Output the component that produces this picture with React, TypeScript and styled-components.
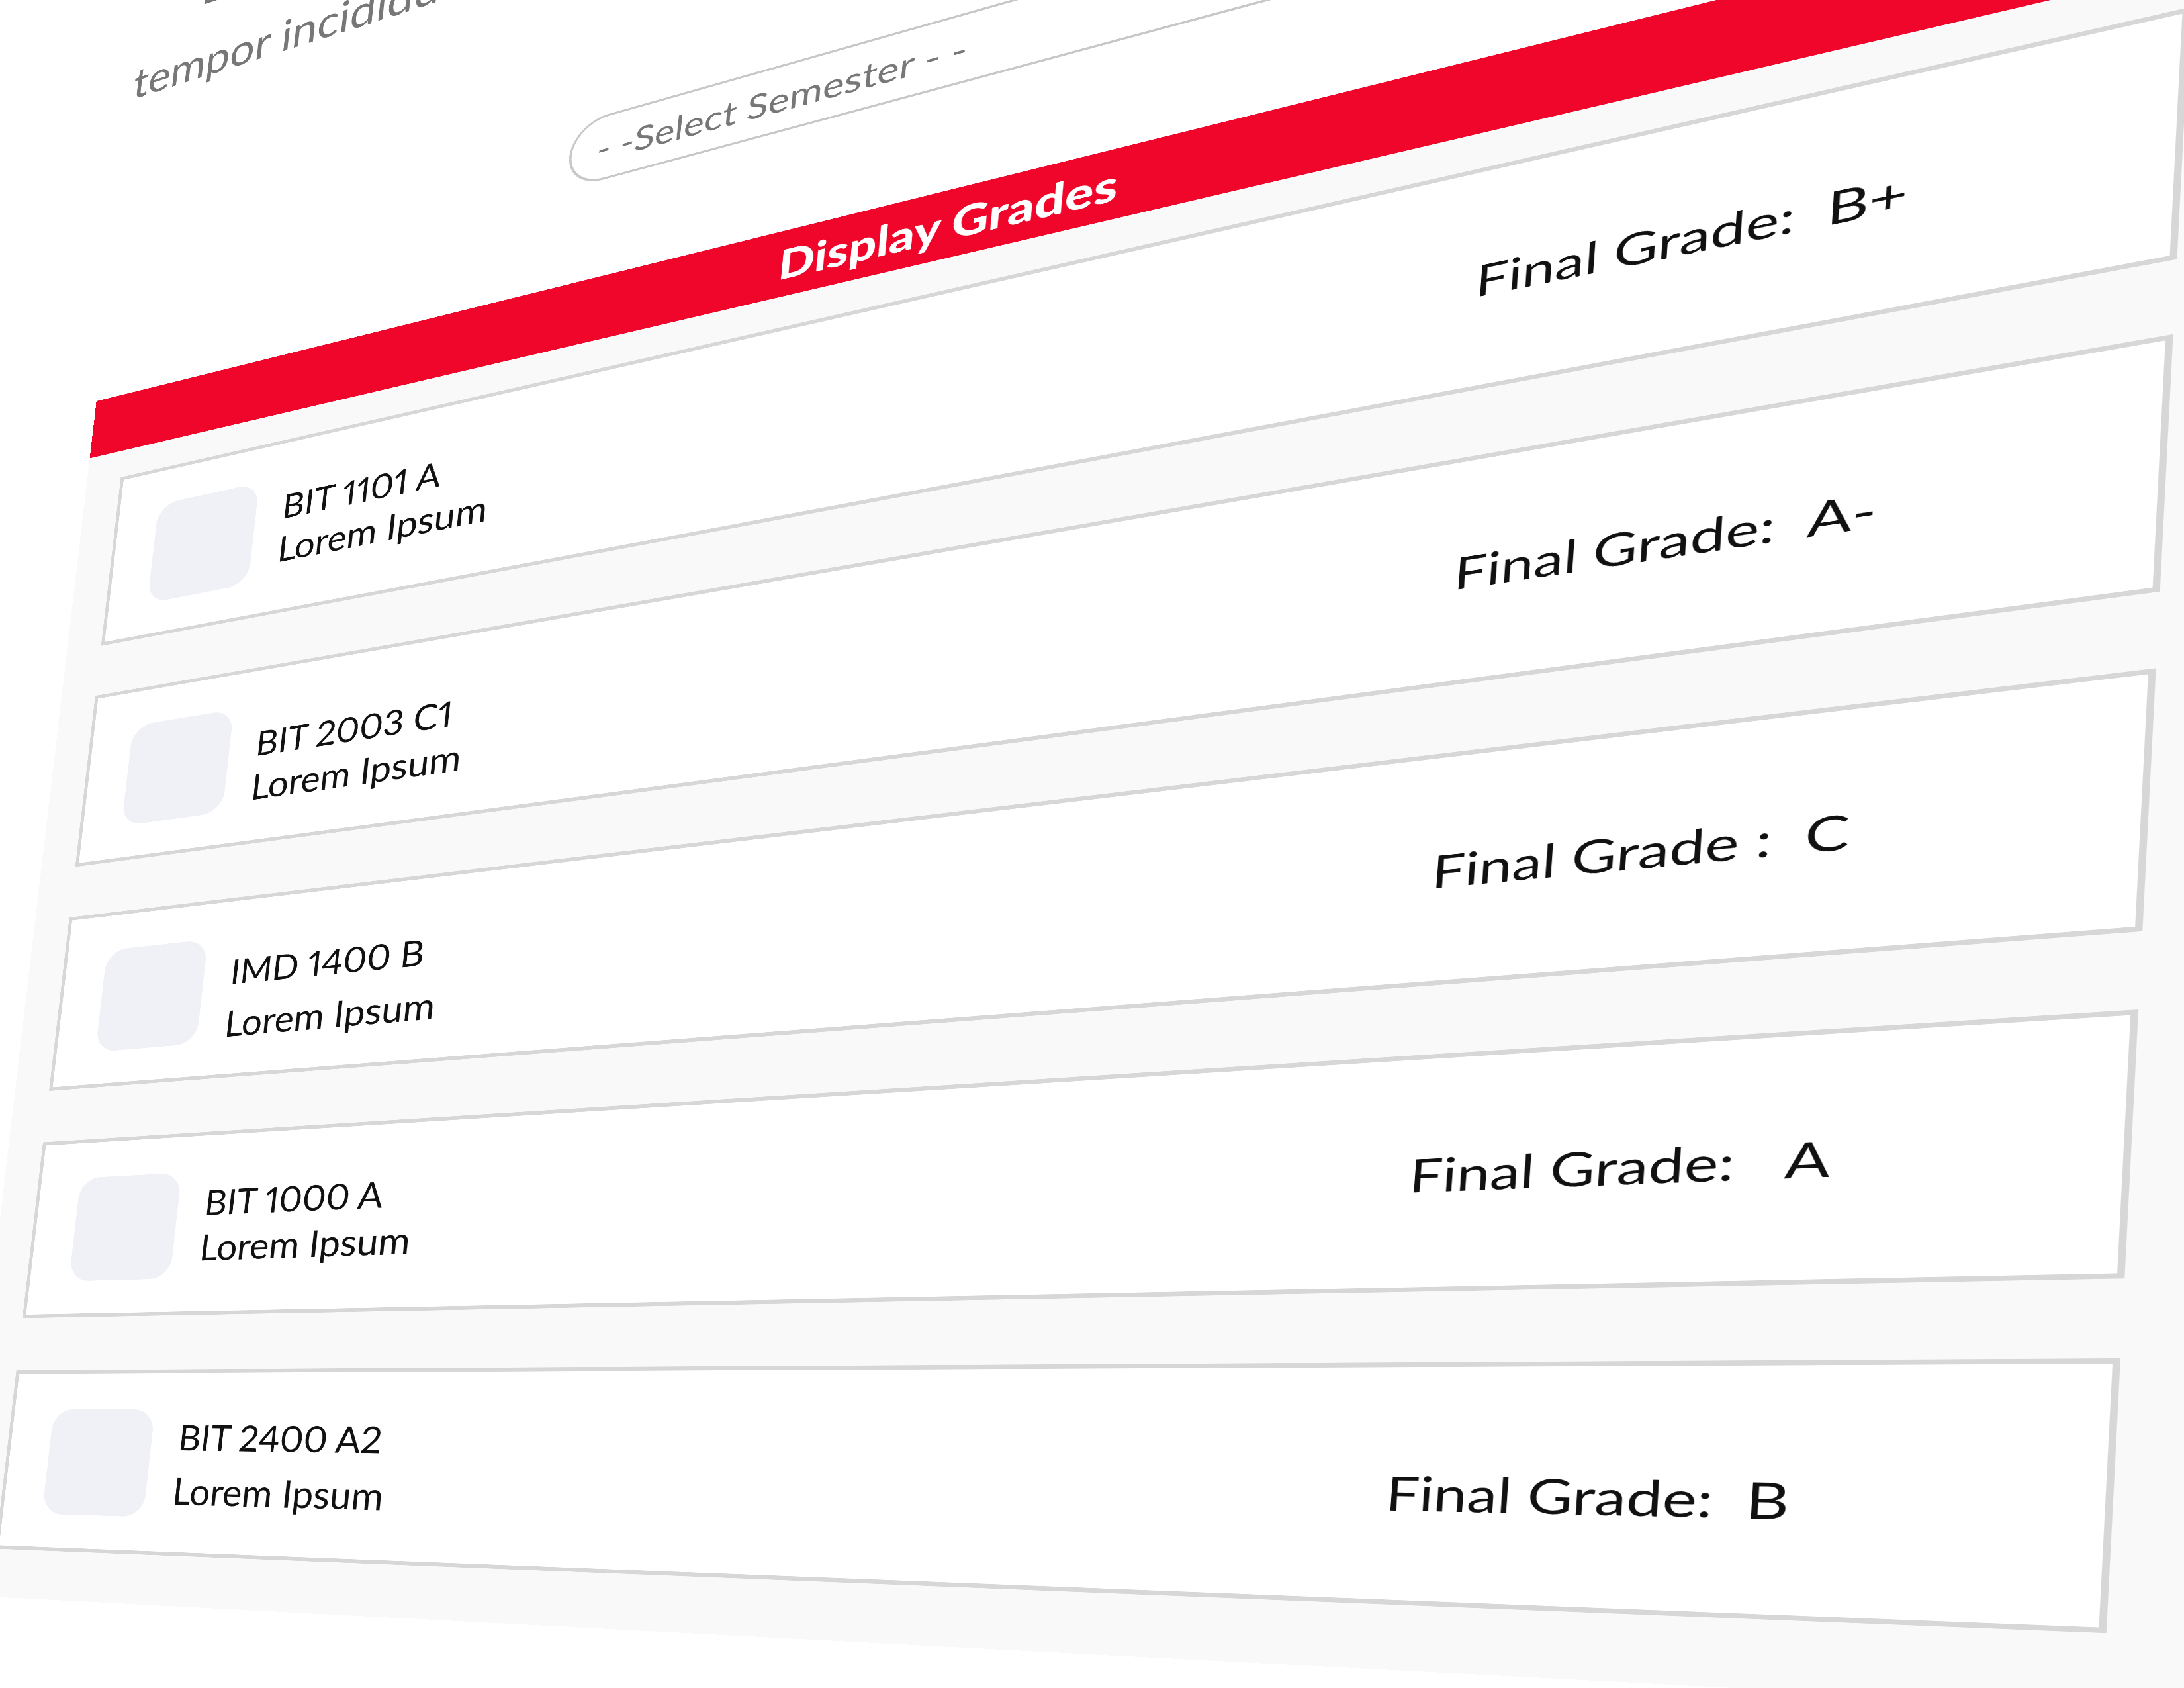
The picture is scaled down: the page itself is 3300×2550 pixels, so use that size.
import React from "react";
import styled, { createGlobalStyle } from "styled-components";

const GlobalStyle = createGlobalStyle`
  *, *::before, *::after { box-sizing: border-box; }
  body {
    margin: 0;
    overflow: hidden;
    background: #ffffff;
    color: #111111;
    font-family: Lato, "Open Sans", sans-serif;
    font-variant-numeric: proportional-nums;
  }
`;

const Stage = styled.div`
  width: 100%;
  height: 100vh;
  overflow: hidden;
`;

/* The whole page is shown as a tilted sheet seen in perspective. */
const Board = styled.main`
  width: calc(100vw + 1112px);
  transform-origin: 0 0;
  transform: matrix3d(
      0.477024, -0.169976, 0, -0.0000808071,
      -0.060038, 0.489167, 0, -0.0000105364,
      0, 0, 1, 0,
      182.5, 721, 0, 1
    )
    translate(-106px, -1595px);
`;

const Intro = styled.p`
  margin: 0;
  color: #777777;
  font-size: 130px;
  line-height: 232px;
  text-align: center;
  white-space: nowrap;
`;

const Filter = styled.form`
  display: flex;
  justify-content: center;
  padding: 417px 0 272px;
`;

const SemesterSelect = styled.select`
  appearance: none;
  width: 1836px;
  height: 184px;
  padding: 0 64px;
  border: 6px solid #c8c8c8;
  border-radius: 92px;
  background: #ffffff;
  color: #777777;
  font-family: inherit;
  font-size: 92px;
`;

const Title = styled.h1`
  margin: 0;
  padding-right: 32px;
  background: #f0062b;
  color: #ffffff;
  font-family: "Lato Black", Lato, sans-serif;
  font-size: 108px;
  font-weight: 900;
  line-height: 176px;
  text-align: center;
`;

const Panel = styled.section`
  background: #f9f9f9;
`;

const CourseList = styled.ul`
  display: flex;
  flex-direction: column;
  gap: 150px;
  margin: 0;
  padding: 82px 106px 136px;
  list-style: none;
`;

const Card = styled.li`
  display: flex;
  align-items: center;
  gap: 76px;
  height: 510px;
  padding: 8px 0 0 118px;
  border: 10px solid #d7d7d7;
  background: #ffffff;
`;

const Thumb = styled.div`
  flex: none;
  width: 296px;
  height: 296px;
  border-radius: 60px;
  background: #f0f1f6;
`;

const Course = styled.div<{ $loose?: boolean; $low?: boolean }>`
  flex: 1;
  padding-top: ${(p) => (p.$low ? 48 : 0)}px;
  font-size: 100px;
  line-height: ${(p) => (p.$loose ? 146 : 124)}px;
`;

const Code = styled.h2`
  margin: 0;
  font-size: 96px;
  font-weight: 400;
`;

const Name = styled.p`
  margin: 0;
`;

const Grade = styled.p<{ $low?: boolean }>`
  display: flex;
  flex: none;
  width: 1060px;
  margin: 0;
  padding-top: ${(p) => (p.$low ? 32 : 0)}px;
  font-size: 98px;
`;

const GradeLabel = styled.span<{ $wide?: boolean }>`
  width: ${(p) => (p.$wide ? 590 : 564)}px;
`;

type Row = {
  code: string;
  label: string;
  grade: string;
  loose?: boolean;
  lowText?: boolean;
  lowGrade?: boolean;
  wide?: boolean;
};

const rows: Row[] = [
  { code: "BIT 1101 A", label: "Final Grade:", grade: "B+" },
  { code: "BIT 2003 C1", label: "Final Grade:", grade: "A-", lowText: true },
  { code: "IMD 1400 B", label: "Final Grade :", grade: "C", loose: true, lowText: true, wide: true },
  { code: "BIT 1000 A", label: "Final Grade:", grade: "A", wide: true },
  { code: "BIT 2400 A2", label: "Final Grade:", grade: "B", loose: true, lowGrade: true },
];

export default function App() {
  return (
    <Stage>
      <GlobalStyle />
      <Board>
        <Intro>
          Lorem ipsum dolor sit amet, consectetur adipiscing elit, sed do eiusmod
          <br />
          tempor incididunt ut labore et dolore magna aliqua. Ut enim ad minim veniam,
        </Intro>
        <Filter>
          <SemesterSelect aria-label="Semester" defaultValue="">
            <option value="">- -Select Semester - -</option>
          </SemesterSelect>
        </Filter>
        <Panel>
          <Title>Display Grades</Title>
          <CourseList>
            {rows.map((row) => (
              <Card key={row.code}>
                <Thumb />
                <Course $loose={row.loose} $low={row.lowText}>
                  <Code>{row.code}</Code>
                  <Name>Lorem Ipsum</Name>
                </Course>
                <Grade $low={row.lowGrade}>
                  <GradeLabel $wide={row.wide}>{row.label}</GradeLabel>
                  <span>{row.grade}</span>
                </Grade>
              </Card>
            ))}
          </CourseList>
        </Panel>
      </Board>
    </Stage>
  );
}
